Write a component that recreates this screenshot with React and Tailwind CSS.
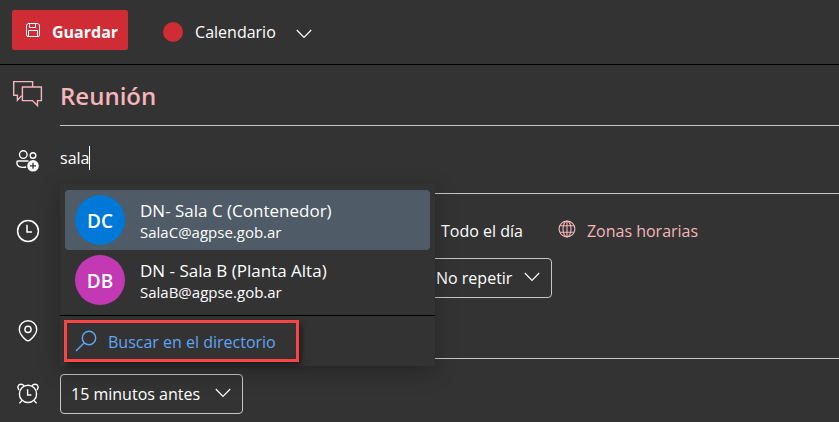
import React, { useState } from "react";

const ChevronIcon = ({ className = "" }) => (
  <svg className={className} width="16" height="10" viewBox="0 0 16 10" fill="none" stroke="currentColor" strokeWidth="1.2">
    <path d="M0.8 1L8 8.4L15.2 1" />
  </svg>
);

const SaveIcon = () => (
  <svg width="14" height="14" viewBox="0 0 14 14" fill="none" stroke="currentColor" strokeWidth="1">
    <path d="M0.5 2L2 0.5H12L13.5 2V12Q13.5 13.5 12 13.5H2Q0.5 13.5 0.5 12Z" />
    <path d="M3.5 0.5V4.5H9.5V0.5M2.5 13.5V7.5H11.5V13.5" />
  </svg>
);

const ChatIcon = () => (
  <svg width="30" height="28" viewBox="0 0 30 28" fill="none" stroke="currentColor" strokeWidth="1.4">
    <path d="M19.6 7V1.6H0.7V15.3H4.4V20.2L8.6 15.8" />
    <path d="M9.4 7H28.4V20.6H24.5V25.6L19.4 20.6H9.4Z" />
  </svg>
);

const PeopleAddIcon = () => (
  <svg width="24" height="22" viewBox="0 0 24 22" fill="none" stroke="currentColor" strokeWidth="1.4">
    <circle cx="7.3" cy="4.6" r="3.8" />
    <circle cx="17" cy="5.5" r="2.8" />
    <path d="M12.5 11H2.2Q0.9 11 0.9 12.4C0.9 16 3.6 17.4 7.4 17.4Q9 17.4 10.2 17" />
    <circle cx="17" cy="15.8" r="5.8" fill="currentColor" stroke="none" />
    <path d="M17 12.8V18.8M14 15.8H20" stroke="#333333" strokeWidth="1.3" />
  </svg>
);

const ClockIcon = () => (
  <svg width="24" height="24" viewBox="0 0 24 24" fill="none" stroke="currentColor" strokeWidth="1.5">
    <circle cx="12" cy="12" r="10.4" />
    <path d="M11 5.8V13H16" />
  </svg>
);

const PinIcon = () => (
  <svg width="20" height="22" viewBox="0 0 20 22" fill="none" stroke="currentColor" strokeWidth="1.4">
    <path d="M10 20.8C8.6 20.8 1.3 15 1.3 9.2A8.7 8.4 0 0 1 18.7 9.2C18.7 15 11.4 20.8 10 20.8Z" />
    <circle cx="10" cy="9.4" r="3.1" />
  </svg>
);

const AlarmIcon = () => (
  <svg width="22" height="22" viewBox="0 0 22 22" fill="none" stroke="currentColor" strokeWidth="1.4">
    <circle cx="11" cy="10.9" r="8.6" />
    <path d="M10.6 6.2V12H14.4M5 17.4L2.4 20.4M17 17.4L19.6 20.4" />
    <path d="M2 7C-0.2 4.4 1.2 1.2 3.8 1.2Q6 1.2 7 2.9M20 7C22.2 4.4 20.8 1.2 18.2 1.2Q16 1.2 15 2.9" />
  </svg>
);

const GlobeIcon = () => (
  <svg width="18" height="18" viewBox="0 0 18 18" fill="none" stroke="currentColor" strokeWidth="1.1">
    <circle cx="9" cy="9" r="7.9" />
    <ellipse cx="9" cy="9" rx="4" ry="7.9" />
    <path d="M9 1V17M2 5.8H16M2 12.2H16" />
  </svg>
);

const SearchIcon = () => (
  <svg width="22" height="22" viewBox="0 0 22 22" fill="none" stroke="currentColor" strokeWidth="1.4">
    <circle cx="14" cy="8" r="6.7" />
    <path d="M9.3 12.7L1 21" />
  </svg>
);

const suggestions = [
  { initials: "DC", name: "DN- Sala C (Contenedor)", email: "SalaC@agpse.gob.ar", color: "bg-[#0078d7]" },
  { initials: "DB", name: "DN - Sala B (Planta Alta)", email: "SalaB@agpse.gob.ar", color: "bg-[#c239b3]" },
];

const SelectBox = ({ label, options, className }) => (
  <div className={`relative h-10 ${className}`}>
    <select
      aria-label={label}
      className="h-full w-full appearance-none rounded-sm border border-[#c8c6c4] bg-[#333333] pl-[10px] pr-8 text-base text-white"
    >
      {options.map((option) => (
        <option key={option}>{option}</option>
      ))}
    </select>
    <ChevronIcon className="pointer-events-none absolute right-3 top-[14px]" />
  </div>
);

const Row = ({ icon, className = "", children }) => (
  <div className={`flex ${className}`}>
    <div className="flex w-15 shrink-0 items-center justify-center pr-1">{icon}</div>
    {children}
  </div>
);

const App = () => {
  const [title, setTitle] = useState("Reunión");
  const [query, setQuery] = useState("sala");
  const [active, setActive] = useState(0);

  return (
    <div className="min-h-screen w-full bg-[#333333] font-['Open_Sans',sans-serif] text-base text-white">
      <header className="flex h-[65px] items-center border-b border-black px-3 pb-1">
        <button className="flex h-10 items-center gap-3 rounded-xs bg-[#d02c36] pl-[14px] pr-[10px] font-bold">
          <SaveIcon />
          <span className="pt-1">Guardar</span>
        </button>
        <button className="ml-[35px] flex items-center">
          <span className="mt-1 h-5 w-5 rounded-full bg-[#d02c36]" />
          <span className="ml-3 pt-1">Calendario</span>
          <ChevronIcon className="ml-5 mt-2" />
        </button>
      </header>

      <main>
        <Row className="h-[61px]" icon={<span className="pb-1 text-[#f4b6ba]"><ChatIcon /></span>}>
          <div className="flex flex-1 border-b border-[#c8c6c4]">
            <input
              aria-label="Título"
              value={title}
              onChange={(e) => setTitle(e.target.value)}
              className="w-full bg-transparent pt-[2px] text-2xl font-semibold text-[#f4b6ba] outline-none"
            />
          </div>
        </Row>

        <Row className="h-[68px]" icon={<span className="pt-[2px]"><PeopleAddIcon /></span>}>
          <div className="relative flex flex-1 items-center border-b border-[#c8c6c4] pb-1">
            <input
              aria-label="Asistentes"
              value={query}
              onChange={(e) => setQuery(e.target.value)}
              className="field-sizing-content bg-transparent caret-transparent outline-none"
            />
            <span className="h-6 w-px bg-white" />

            {/* Suggestions menu */}
            <div className="absolute left-0 top-[58px] z-10 w-[375px] bg-[#333333] shadow-[0_6px_20px_rgba(0,0,0,0.25)]">
              <ul className="px-[5px] pb-[5px] pt-[6px]">
                {suggestions.map((person, i) => (
                  <li key={person.email}>
                    <button
                      onMouseEnter={() => setActive(i)}
                      className={`flex h-15 w-full items-center gap-[15px] rounded-sm px-[10px] text-left ${
                        active === i ? "bg-[#4f5b66]" : ""
                      }`}
                    >
                      <span className={`flex h-[50px] w-[50px] items-center justify-center rounded-full pt-[2px] text-[19px] font-semibold ${person.color}`}>
                        {person.initials}
                      </span>
                      <span className="flex flex-col pt-[2px]">
                        <span className="text-[17px] leading-[22px]">{person.name}</span>
                        <span className="text-[15px] leading-5">{person.email}</span>
                      </span>
                    </button>
                  </li>
                ))}
              </ul>
              <div className="border-t border-black p-1">
                <button className="flex h-[42px] items-center gap-[11px] border-3 border-[#fb4444] pl-2 pr-5 text-[#62a4f4] shadow-[2px_3px_6px_rgba(0,0,0,0.5)]">
                  <SearchIcon />
                  <span className="pt-[2px]">Buscar en el directorio</span>
                </button>
              </div>
            </div>
          </div>
        </Row>

        <Row className="h-[74px]" icon={<ClockIcon />}>
          <div className="flex flex-1 items-center pl-[381px]">
            <span>Todo el día</span>
            <a href="#zonas" className="ml-[35px] flex items-center gap-[11px] text-[#f4b6ba]">
              <span className="pb-1">
                <GlobeIcon />
              </span>
              Zonas horarias
            </a>
          </div>
        </Row>

        <div className="-mt-[10px] flex h-10 pl-[425px]">
          <SelectBox label="Repetición" options={["No repetir", "Cada día", "Cada semana"]} className="w-[127px]" />
        </div>

        <Row className="h-[61px]" icon={<span className="pt-1"><PinIcon /></span>}>
          <div className="flex flex-1 border-b border-[#c8c6c4]">
            <input aria-label="Ubicación" className="w-full bg-transparent outline-none" />
          </div>
        </Row>

        <Row className="pt-[15px]" icon={<AlarmIcon />}>
          <SelectBox label="Recordatorio" options={["15 minutos antes", "30 minutos antes", "1 hora antes"]} className="w-[183px]" />
        </Row>
      </main>
    </div>
  );
};

export default App;
